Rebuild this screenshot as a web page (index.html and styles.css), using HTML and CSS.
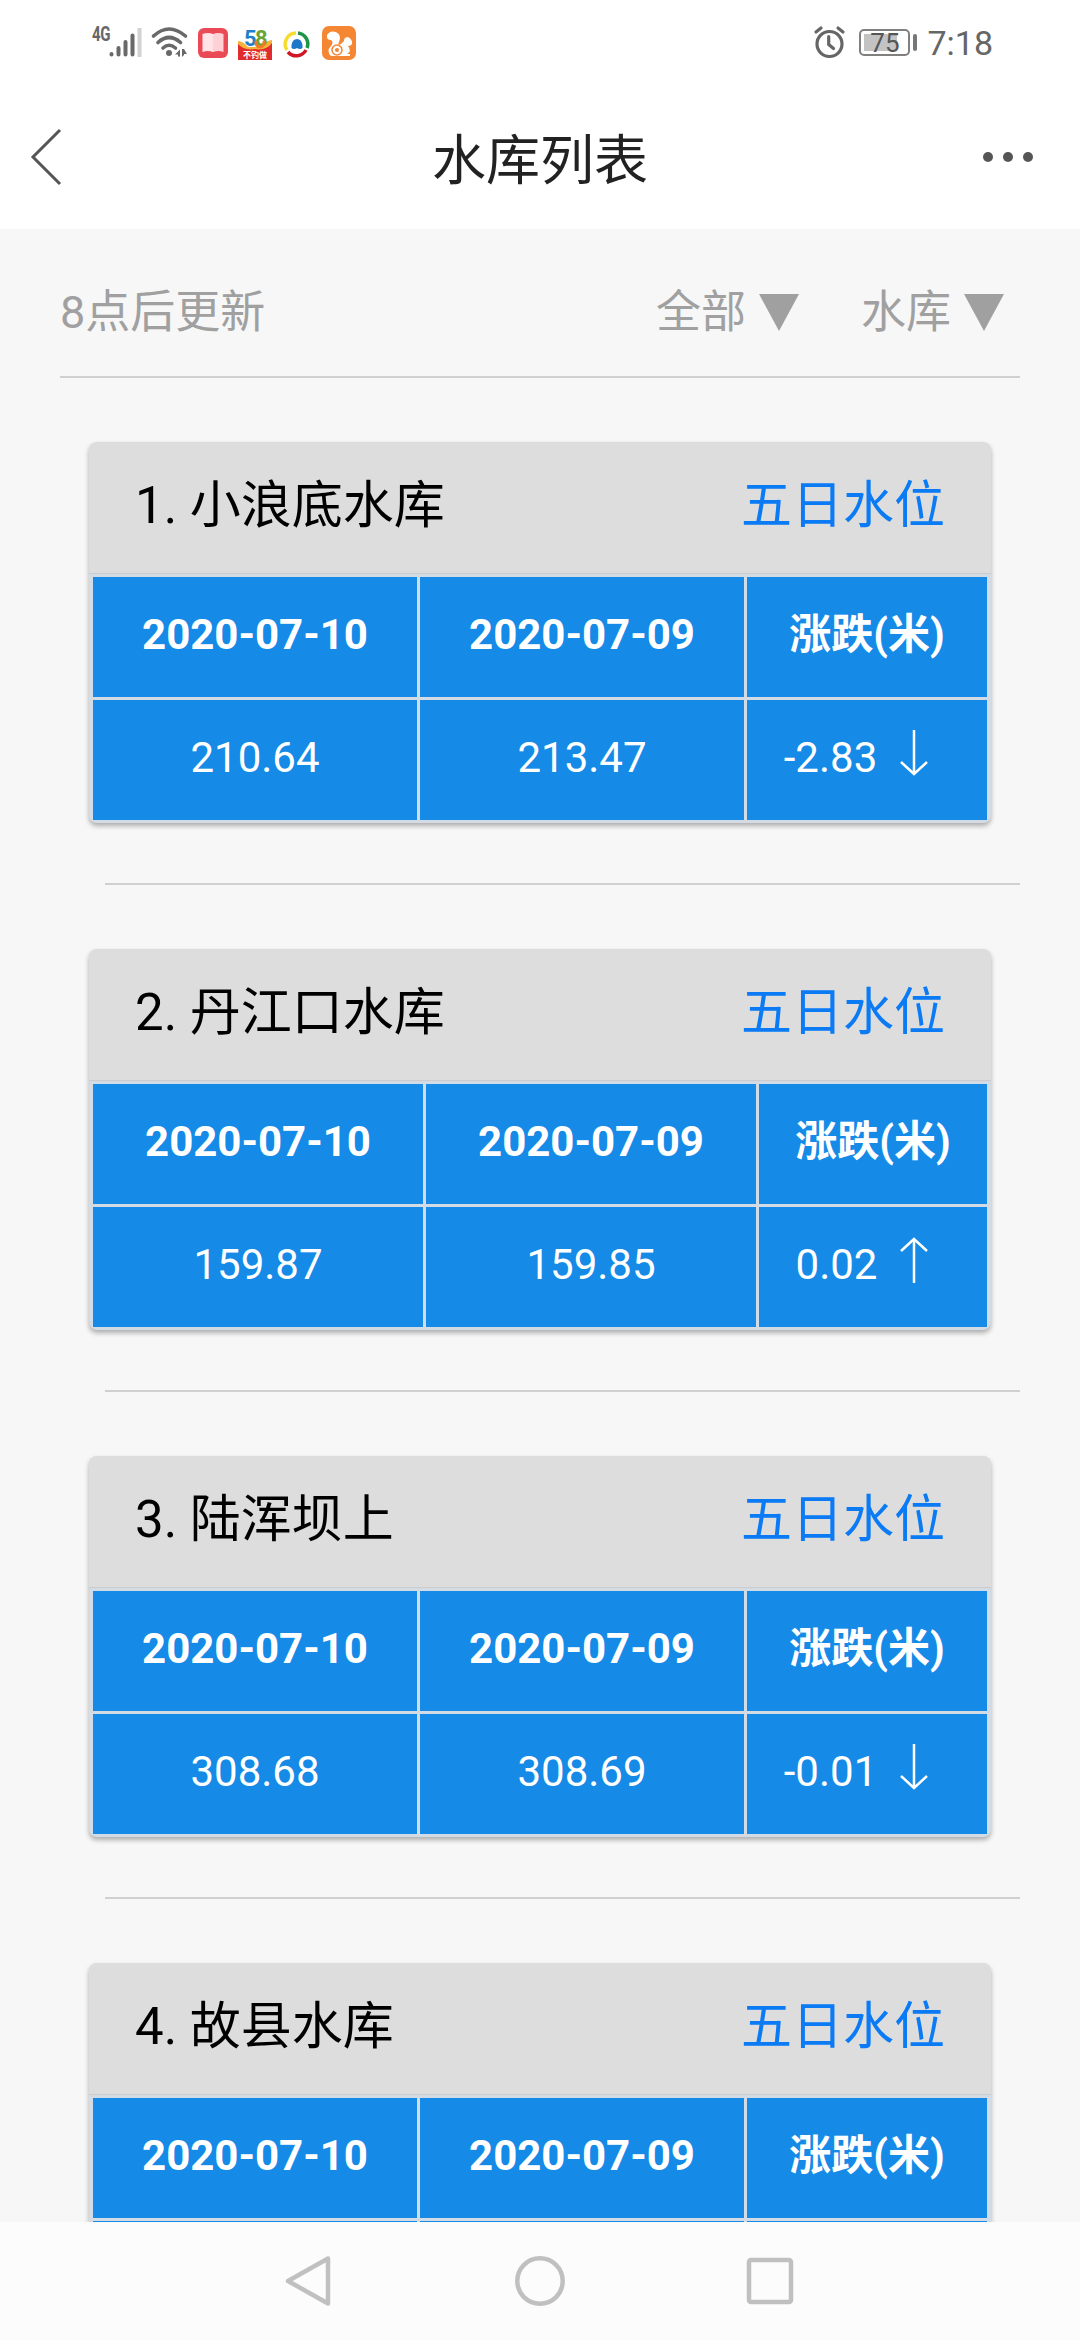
FILE: index.html
```
<!DOCTYPE html>
<html lang="zh-CN">
  <head>
    <meta charset="UTF-8" />
    <meta name="viewport" content="width=device-width, initial-scale=1.0" />
    <title>水库列表</title>
    <link rel="stylesheet" href="styles.css">
  </head>
  <body>
    <div class="status-bar">
      <div class="status-left">
        <span class="network">4G</span>
        <svg class="signal" width="34" height="32" viewBox="0 0 34 32">
          <g stroke="#696969" stroke-width="4" stroke-linecap="round">
            <path d="M3.5 28v.5M10.500 22v6.500M17.500 16v12.500M24.500 9.500v19" />
            <path d="M31.500 2v29" stroke="#d2d2d2" stroke-linecap="butt" />
          </g>
        </svg>
        <svg class="wifi" width="38" height="32" viewBox="0 0 38 32">
          <g fill="none" stroke="#696969" stroke-width="3.600" stroke-linecap="round">
            <path d="M2.500 10Q18 -4 34.500 10" />
            <path d="M7 16.500Q18 6.500 29.500 16.500" />
            <path d="M12 22Q18 16.500 24.500 22" />
          </g>
          <circle cx="18" cy="27" r="3" fill="#696969" />
          <path d="M24 28.500l5-5v7h-2v-2zM31 23v8l2-2v-1h3l-3-5z" fill="#696969" />
        </svg>
        <svg class="app-book" width="30" height="30" viewBox="0 0 30 30">
          <rect width="30" height="30" rx="6" fill="#ea4a56" />
          <path d="M4.500 6q5-2 10.500 0v18q-5-2-10.500 0z" fill="#ffe3e6" />
          <path d="M15 6q5-2 10.500 0v18q-5-2-10.500 0z" fill="#ffd0d6" />
        </svg>
        <svg class="app-58" width="34" height="30" viewBox="0 0 34 30">
          <path d="M0 11q5 0 10 6h14q4-7 10-7v18H0z" fill="#f6b23b" />
          <path d="M0 14q6 7 17 5 11 2 17-6v17H0z" fill="#e02c2c" />
          <text x="6" y="16" class="app-58-num" fill="#1f7fc8">5</text>
          <text x="17" y="16" class="app-58-num" fill="#6aa534">8</text>
          <path d="M18.500 11a4 4 0 1 0 7 0" fill="none" stroke="#ef7b25" stroke-width="3" />
          <text x="17" y="27.500" class="app-58-tag">不钓做</text>
        </svg>
        <svg class="app-ball" width="26" height="26" viewBox="0 0 26 26">
          <g fill="none" stroke-width="3.500">
            <path d="M3 19A11 11 0 0 1 12 2" stroke="#f6dc2c" />
            <path d="M14 2A11 11 0 0 1 23 17" stroke="#1e9447" />
            <path d="M22 19A11 11 0 0 1 4 21" stroke="#cf1624" />
          </g>
          <path d="M7.500 17v-3q1-6 5.500-6t5.500 6v3q-2.500 2-5.500 0-3 2-5.500 0z" fill="#1c78c8" />
        </svg>
        <svg class="app-uc" width="34" height="34" viewBox="0 0 34 34">
          <rect width="34" height="34" rx="7" fill="#f58634" />
          <path d="M9 30Q4 25 9 20 12 16 9 14 4 14 5 9 8 4 14 6 20 9 17 16 15 20 19 18L22 15Q22 11 26 11 31 14 30 18 29 20 26 20 30 25 25 28H28V30z" fill="#fff" />
          <circle cx="15" cy="24" r="5" fill="none" stroke="#f58634" stroke-width="1.500" />
          <circle cx="15" cy="24" r="2" fill="#f58634" />
        </svg>
      </div>
      <div class="status-right">
        <svg width="31" height="32" viewBox="0 0 31 32">
          <g fill="none" stroke="#666" stroke-width="3.200" stroke-linecap="round">
            <circle cx="15.500" cy="18" r="12.500" />
            <path d="M14.700 10.500v8l4.800 4M2 6l5-4M24 2l5 4" />
          </g>
        </svg>
        <div class="battery">
          <div class="battery-level"></div>
          <span class="battery-text">75</span>
        </div>
        <span class="battery-tip"></span>
        <span class="time">7:18</span>
      </div>
    </div>

    <div class="title-bar">
      <svg width="32" height="58" viewBox="0 0 32 58">
        <path d="M30 2L3 29l27 27" fill="none" stroke="#555" stroke-width="3" />
      </svg>
      <h1>水库列表</h1>
      <svg width="52" height="12" viewBox="0 0 52 12" fill="#555">
        <circle cx="6" cy="6" r="5" />
        <circle cx="26" cy="6" r="5" />
        <circle cx="46" cy="6" r="5" />
      </svg>
    </div>

    <div class="content">
      <div class="filter-bar">
        <span>8点后更新</span>
        <div class="filters">
          <span class="filter">全部<i class="caret"></i></span>
          <span class="filter">水库<i class="caret"></i></span>
        </div>
      </div>

      <div class="item">
        <div class="card">
          <div class="card-header">
            <span>1. 小浪底水库</span>
            <a class="link">五日水位</a>
          </div>
          <table>
            <tr>
              <th>2020-07-10</th>
              <th>2020-07-09</th>
              <th class="change">涨跌(米)</th>
            </tr>
            <tr>
              <td>210.64</td>
              <td>213.47</td>
              <td>-2.83<svg class="arrow" width="28" height="46" viewBox="0 0 28 46"><path d="M14 0v44M1 32l13 12 13-12" /></svg></td>
            </tr>
          </table>
        </div>
      </div>

      <div class="item">
        <div class="card">
          <div class="card-header">
            <span>2. 丹江口水库</span>
            <a class="link">五日水位</a>
          </div>
          <table>
            <tr>
              <th>2020-07-10</th>
              <th>2020-07-09</th>
              <th class="change narrow">涨跌(米)</th>
            </tr>
            <tr>
              <td>159.87</td>
              <td>159.85</td>
              <td>0.02<svg class="arrow" width="28" height="46" viewBox="0 0 28 46"><path d="M14 46V2M1 14L14 2l13 12" /></svg></td>
            </tr>
          </table>
        </div>
      </div>

      <div class="item">
        <div class="card">
          <div class="card-header">
            <span>3. 陆浑坝上</span>
            <a class="link">五日水位</a>
          </div>
          <table>
            <tr>
              <th>2020-07-10</th>
              <th>2020-07-09</th>
              <th class="change">涨跌(米)</th>
            </tr>
            <tr>
              <td>308.68</td>
              <td>308.69</td>
              <td>-0.01<svg class="arrow" width="28" height="46" viewBox="0 0 28 46"><path d="M14 0v44M1 32l13 12 13-12" /></svg></td>
            </tr>
          </table>
        </div>
      </div>

      <div class="item">
        <div class="card">
          <div class="card-header">
            <span>4. 故县水库</span>
            <a class="link">五日水位</a>
          </div>
          <table>
            <tr>
              <th>2020-07-10</th>
              <th>2020-07-09</th>
              <th class="change">涨跌(米)</th>
            </tr>
            <tr>
              <td></td>
              <td></td>
              <td></td>
            </tr>
          </table>
        </div>
      </div>
    </div>

    <div class="nav-bar">
      <svg width="50" height="50" viewBox="0 0 50 50">
        <path d="M44 2.500v45L4 25z" />
      </svg>
      <svg width="50" height="50" viewBox="0 0 50 50">
        <circle cx="25" cy="25" r="22.700" />
      </svg>
      <svg width="50" height="50" viewBox="0 0 50 50">
        <rect x="3" y="4" width="42" height="42" rx="2" />
      </svg>
    </div>
  </body>
</html>
```
FILE: styles.css
```
* {
  box-sizing: border-box;
}
body {
  margin: 0;
  width: 1080px;
  height: 2340px;
  overflow: hidden;
  display: flex;
  flex-direction: column;
  font-family: Roboto, "Noto Sans CJK SC", sans-serif;
  background: #fff;
}
svg {
  display: block;
  flex: none;
  overflow: visible;
}

/* status bar */
.status-bar {
  height: 85px;
  flex: none;
  display: flex;
  justify-content: space-between;
  padding: 0 87px 0 92px;
  color: #666;
}
.status-left,
.status-right {
  display: flex;
  align-items: flex-start;
}
.network {
  width: 16px;
  margin-top: 23px;
  font-size: 20px;
  line-height: 22px;
  font-weight: bold;
  letter-spacing: -0.5px;
  transform: scaleX(0.75);
  transform-origin: left;
}
.signal {
  margin-top: 26px;
}
.wifi {
  margin: 26px 0 0 9px;
}
.app-book {
  margin: 28px 0 0 9px;
}
.app-58 {
  margin: 30px 0 0 10px;
}
.app-58-num {
  font-size: 22px;
  font-weight: bold;
}
.app-58-tag {
  font-size: 8px;
  font-weight: bold;
  fill: #fff;
  text-anchor: middle;
}
.app-ball {
  margin: 31px 0 0 12px;
}
.app-uc {
  margin: 26px 0 0 12px;
}
.status-right svg {
  margin-top: 26px;
}
.battery {
  position: relative;
  width: 51px;
  height: 27px;
  margin: 29px 3px 0 14px;
  padding: 3px;
  border: 2px solid #808080;
  border-radius: 5px;
}
.battery-level {
  width: 33px;
  height: 17px;
  background: #c3c3c3;
}
.battery-text {
  position: absolute;
  inset: 0;
  font-size: 26px;
  line-height: 24px;
  text-align: center;
  color: #555;
}
.battery-tip {
  width: 4px;
  height: 17px;
  margin-top: 34px;
  border-radius: 2px;
  background: #777;
}
.time {
  margin: 23px 0 0 10px;
  font-size: 34px;
  line-height: 40px;
}

/* title */
.title-bar {
  height: 144px;
  flex: none;
  display: flex;
  align-items: center;
  justify-content: space-between;
  padding: 0 46px 0 30px;
}
.title-bar h1 {
  margin: 10px 0 0 36px;
  font-size: 54px;
  line-height: 70px;
  font-weight: normal;
  color: #222;
}

/* list */
.content {
  flex: 1;
  min-height: 0;
  overflow: hidden;
  padding: 0 60px;
  background: #f7f7f7;
}
.filter-bar {
  height: 149px;
  display: flex;
  justify-content: space-between;
  padding-top: 50px;
  border-bottom: 2px solid #d0d0d0;
  font-size: 45px;
  line-height: 68px;
  color: #a0a0a0;
}
.filters {
  display: flex;
  gap: 62px;
  padding-right: 16px;
}
.filter {
  display: flex;
}
.caret {
  margin: 15px 0 0 13px;
  border: 20.500px solid transparent;
  border-top: 37px solid #a0a0a0;
  border-bottom: 0;
  height: 0;
}
.item {
  margin-left: 45px;
  padding: 64px 0 60px;
  border-bottom: 2px solid #d0d0d0;
}
.card {
  width: 902px;
  margin-left: -16px;
  padding: 0 1px;
  border-radius: 8px;
  background: #d3dce4;
  box-shadow: 0 3px 5px rgba(0, 0, 0, 0.3);
}
.card-header {
  height: 132px;
  margin: 0 -1px;
  padding: 27px 46px 0;
  display: flex;
  justify-content: space-between;
  border-bottom: 1px solid #ccc;
  border-radius: 8px 8px 0 0;
  background: #ddd;
  font-size: 51px;
  line-height: 74px;
  color: #000;
}
.link {
  color: #0a7af5;
}
table {
  width: 900px;
  table-layout: fixed;
  border-spacing: 3px;
  color: #fff;
  font-size: 42px;
  line-height: 62px;
}
th,
td {
  height: 120px;
  padding: 0 0 4px;
  text-align: center;
  white-space: nowrap;
  background: #158ae6;
}
.change {
  width: 240px;
}
.change.narrow {
  width: 228px;
}
.arrow {
  display: inline-block;
  margin: 0 22px 0 23px;
  vertical-align: -4px;
  fill: none;
  stroke: #fff;
  stroke-width: 2.500;
}

/* android navigation */
.nav-bar {
  height: 118px;
  flex: none;
  display: grid;
  grid-template-columns: repeat(3, 1fr);
  justify-items: center;
  padding: 34px 194px 0;
  background: #fcfcfc;
}
.nav-bar svg {
  fill: none;
  stroke: #c0c0c0;
  stroke-width: 4.500;
  stroke-linejoin: round;
}
```
